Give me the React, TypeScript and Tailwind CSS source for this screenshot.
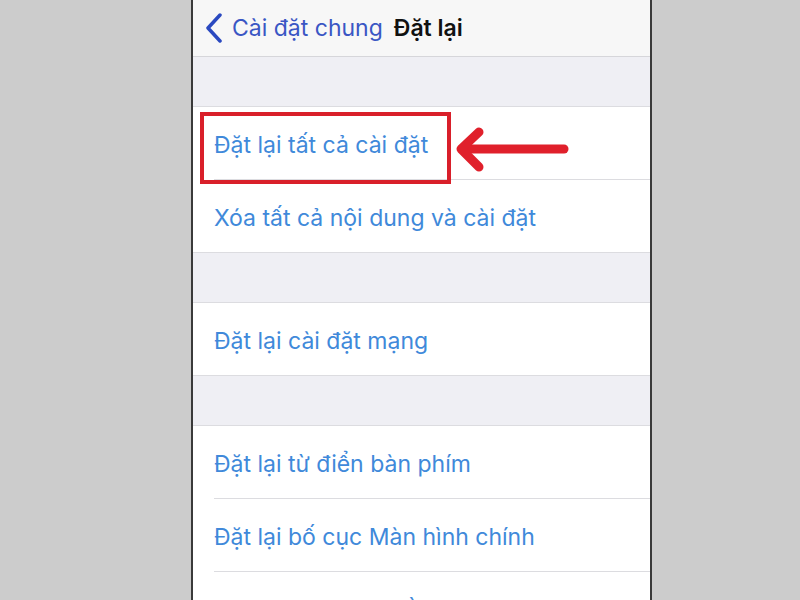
import React from "react";

const font = { fontFamily: "Inter, 'Noto Sans', sans-serif" };

function Row({ label, last }: { label: string; last?: boolean }) {
  return (
    <div className="bg-white">
      <div className="flex h-[72px] items-center pl-[21px] pt-[4px] text-[23px] text-[#4089da]">
        {label}
      </div>
      {!last && <div className="ml-[21px] h-px bg-[#dcdce0]" />}
    </div>
  );
}

function Group({ children }: { children: React.ReactNode }) {
  return <div className="border-y border-[#dcdce0]">{children}</div>;
}

export default function App() {
  return (
    <div className="relative h-[600px] w-[800px] overflow-hidden bg-[#cccccc]" style={font}>
      <div className="ml-[191px] h-[600px] w-[461px] overflow-hidden border-x-2 border-[#3a3a3a] bg-[#efeff4]">
        <nav className="flex h-[57px] items-center border-b border-[#d6d6da] bg-[#f7f7f7]">
          <svg width="20" height="30" viewBox="0 0 20 30" className="ml-[11px]">
            <path d="M16 2 L4 15 L16 28" fill="none" stroke="#2a49c0" strokeWidth="3.5" strokeLinecap="round" strokeLinejoin="round" />
          </svg>
          <span className="ml-[8px] text-[23px] text-[#3a56c4]">Cài đặt chung</span>
          <span className="ml-[11px] text-[23px] font-semibold text-[#111]">Đặt lại</span>
        </nav>

        <div className="h-[49px]" />
        <Group>
          <Row label="Đặt lại tất cả cài đặt" />
          <Row label="Xóa tất cả nội dung và cài đặt" last />
        </Group>

        <div className="h-[49px]" />
        <Group>
          <Row label="Đặt lại cài đặt mạng" last />
        </Group>

        <div className="h-[49px]" />
        <Group>
          <Row label="Đặt lại từ điển bàn phím" />
          <Row label="Đặt lại bố cục Màn hình chính" />
          <Row label="Đặt lại vị trí & quyền riêng tư" last />
        </Group>
      </div>

      <div className="absolute left-[200px] top-[112px] h-[72px] w-[251px] border-[4px] border-[#d91f2a]" />

      <svg className="absolute left-[450px] top-[122px]" width="125" height="55" viewBox="0 0 125 55">
        <g fill="none" stroke="#e0202b" strokeWidth="9" strokeLinecap="round" strokeLinejoin="round">
          <path d="M12 27 L114 27" />
          <path d="M29 10 L11 27 L29 45" />
        </g>
      </svg>
    </div>
  );
}
